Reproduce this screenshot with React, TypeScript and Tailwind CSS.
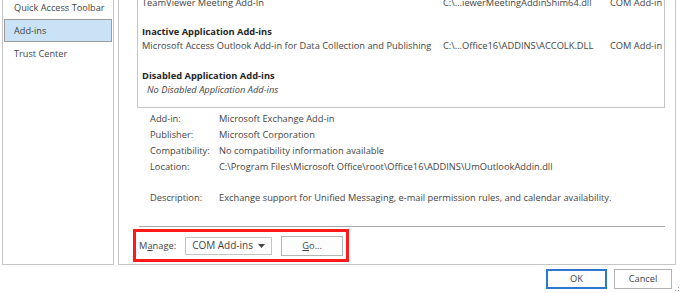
import React from "react";

const font = { fontFamily: '"Open Sans", "Noto Sans", Arial, sans-serif' };

function SideItem({ label, active = false, first = false }: { label: string; active?: boolean; first?: boolean }) {
  return (
    <div
      className={
        "h-[23px] flex items-center pl-[9px] whitespace-nowrap " +
        (first ? "mt-[-4px] " : "") +
        (active ? "bg-[#c9e2f6] border border-[#9c9c9c] mx-px" : "mx-px border border-transparent")
      }
    >
      {label}
    </div>
  );
}

function AddinRow({ name, path, type }: { name: string; path?: string; type?: string }) {
  return (
    <div className="grid grid-cols-[301px_167px_1fr] h-[14px] items-center whitespace-nowrap">
      <span>{name}</span>
      <span>{path}</span>
      <span>{type}</span>
    </div>
  );
}

function Detail({ label, value }: { label: string; value: string }) {
  return (
    <div className="flex h-[16px] items-center whitespace-nowrap">
      <span className="w-[69px] shrink-0">{label}</span>
      <span>{value}</span>
    </div>
  );
}

export default function App() {
  return (
    <div className="w-[680px] h-[293px] bg-white text-[#444] text-[9.3px] overflow-hidden relative" style={font}>
      <div className="flex h-[265px] pl-[2px] pr-[4px] gap-[4px]">
        {/* left nav */}
        <div className="w-[112px] border-x border-b border-[#c6c6c6] overflow-hidden text-[#444] text-[9.2px]">
          <SideItem label="Quick Access Toolbar" first />
          <SideItem label="Add-ins" active />
          <SideItem label="Trust Center" />
        </div>

        {/* main panel */}
        <div className="flex-1 border-x border-b border-[#c6c6c6] flex flex-col overflow-hidden">
          <div className="ml-[18px] mr-[10px] border-x border-b border-[#c6c6c6] pl-[4px] pb-[10px]">
            <div className="mt-[-4px]">
              <AddinRow name="TeamViewer Meeting Add-In" path="C:\...iewerMeetingAddinShim64.dll" type="COM Add-in" />
            </div>
            <div className="h-[15px]" />
            <div className="h-[14px] flex items-center font-bold text-[#262626]">Inactive Application Add-ins</div>
            <AddinRow name="Microsoft Access Outlook Add-in for Data Collection and Publishing" path="C:\...Office16\ADDINS\ACCOLK.DLL" type="COM Add-in" />
            <div className="h-[16px]" />
            <div className="h-[14px] flex items-center font-bold text-[#262626]">Disabled Application Add-ins</div>
            <div className="h-[14px] flex items-center italic pl-[5px]">No Disabled Application Add-ins</div>
          </div>

          <div className="pl-[31px] pt-[3px]">
            <Detail label="Add-in:" value="Microsoft Exchange Add-in" />
            <Detail label="Publisher:" value="Microsoft Corporation" />
            <Detail label="Compatibility:" value="No compatibility information available" />
            <Detail label="Location:" value="C:\Program Files\Microsoft Office\root\Office16\ADDINS\UmOutlookAddin.dll" />
            <div className="h-[15px]" />
            <Detail label="Description:" value="Exchange support for Unified Messaging, e-mail permission rules, and calendar availability." />
          </div>

          <div className="mt-auto ml-[20px] mr-[10px] border-t border-[#a8a8a8]" />
          <div className="ml-[14px] mt-[2px] mb-[2px] w-[216px] h-[33px] border-[3px] border-[#ff1a1a] flex items-center pl-[3px] gap-[9px]">
            <span>
              M<span className="underline">a</span>nage:
            </span>
            <div className="w-[87px] h-[18px] border border-[#c3c3c3] flex items-center justify-between px-[6px] text-[10px]">
              <span>COM Add-ins</span>
              <svg width="7" height="4" viewBox="0 0 7 4">
                <path d="M0 0H7L3.5 4Z" fill="#444" />
              </svg>
            </div>
            <div className="w-[62px] h-[20px] border border-[#b4b4b4] bg-[#fdfdfd] flex items-center justify-center">
              <span>
                <span className="underline">G</span>o...
              </span>
            </div>
          </div>
        </div>
      </div>

      {/* dialog buttons */}
      <div className="flex justify-end gap-[7px] pr-[8px] mt-[4px]">
        <div className="w-[61px] h-[20px] border-2 border-[#2a78d2] flex items-center justify-center">OK</div>
        <div className="w-[58px] h-[20px] border border-[#b4b4b4] flex items-center justify-center">Cancel</div>
      </div>

      <svg className="absolute right-[1px] bottom-[2px]" width="4" height="4" viewBox="0 0 4 4">
        <rect x="3" y="0" width="1" height="1" fill="#a0a0a0" />
        <rect x="3" y="3" width="1" height="1" fill="#a0a0a0" />
        <rect x="0" y="3" width="1" height="1" fill="#a0a0a0" />
      </svg>
    </div>
  );
}
